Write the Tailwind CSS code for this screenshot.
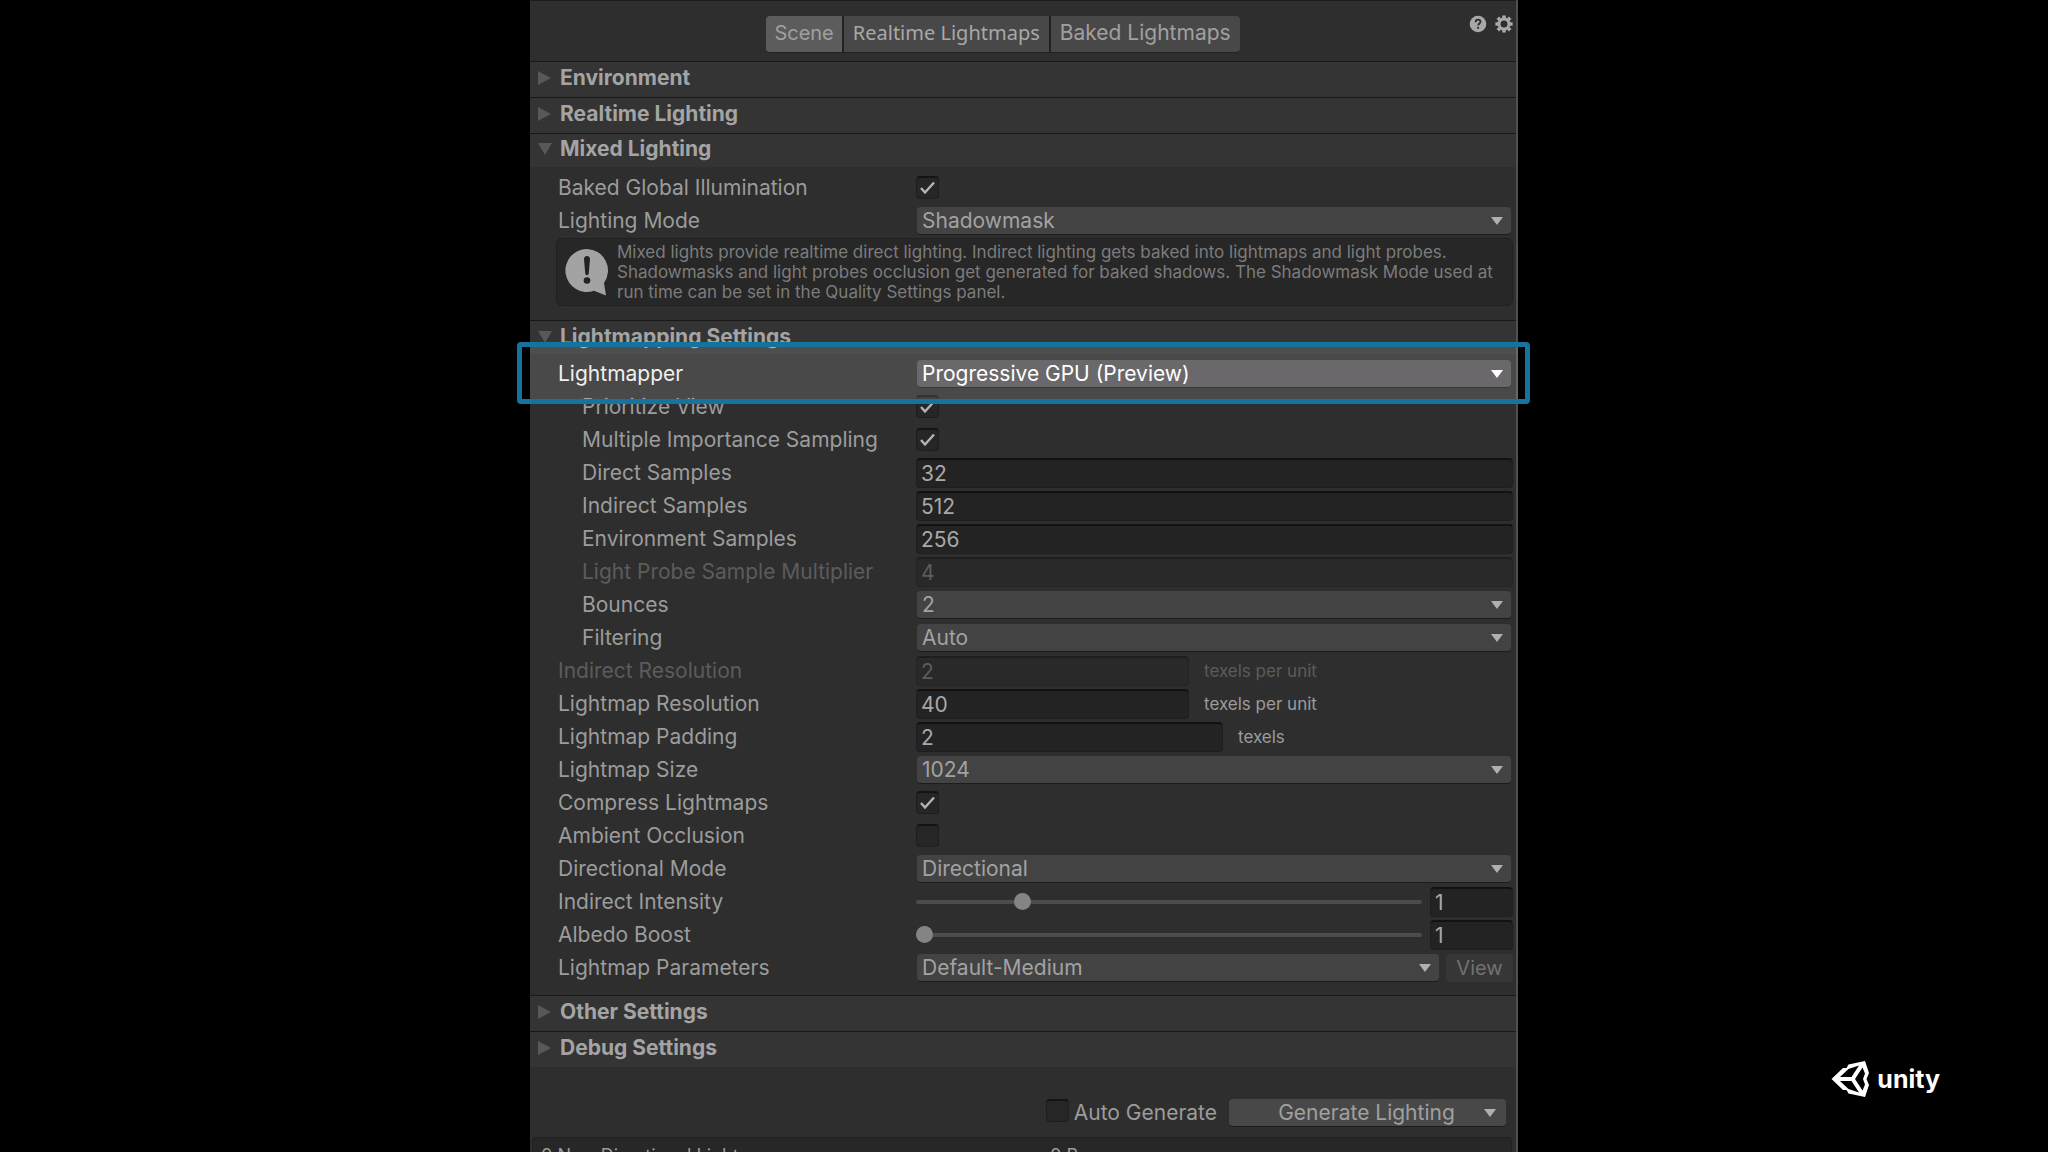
<!DOCTYPE html>
<html lang="en">
<head>
  <meta charset="UTF-8" />
  <meta name="viewport" content="width=device-width, initial-scale=1.0"/>
  <title>Lighting</title>
  <script src="https://cdn.jsdelivr.net/npm/@tailwindcss/browser@4"></script>
</head>
<body class="h-screen overflow-hidden bg-black font-['Inter',sans-serif] text-[21px] leading-7 text-[#9c9c9c]">
  <div class="grid h-full grid-cols-[530fr_988fr_530fr]">
    <div></div>

    <!-- Lighting window -->
    <main class="flex flex-col border-r-2 border-[#505050] bg-[#2e2e2e]">
      <header class="relative flex h-[61px] shrink-0 items-start justify-center border-t border-[#1c1c1c] pt-[15px] pr-10">
        <div class="flex gap-[2px] overflow-hidden rounded border-b border-[#222222] bg-[#222222]">
          <button class="h-9 bg-[#5c5c5c] px-2 pb-0.5 text-xl text-[#a0a0a0]">Scene</button>
          <button class="h-9 bg-[#484848] px-[9px] pb-0.5 font-['Noto_Sans',sans-serif] text-xl text-[#a8a8a8]">Realtime Lightmaps</button>
          <button class="h-9 bg-[#484848] px-[9px] pb-0.5 text-[#a0a0a0]">Baked Lightmaps</button>
        </div>
        <div class="absolute top-[14px] right-[3px] flex gap-2">
          <button aria-label="Help">
            <svg class="size-[18px]" viewBox="0 0 18 18"><circle cx="9" cy="9" r="8.3" fill="#a8a8a8"/><path d="M6.6 7.2c0-1.5 1-2.5 2.5-2.5s2.4.9 2.4 2.1c0 1.7-2.3 1.8-2.3 3.6" fill="none" stroke="#2e2e2e" stroke-width="1.8"/><circle cx="9.1" cy="12.8" r="1.1" fill="#2e2e2e"/></svg>
          </button>
          <button aria-label="Settings">
            <svg class="size-[18px]" viewBox="0 0 18 18"><circle cx="9" cy="9" r="5" fill="none" stroke="#a8a8a8" stroke-width="3"/><path d="M9 .4v3M9 14.600v3M.4 9h3M14.600 9h3M2.800 2.800l2 2M13.200 13.200l2 2M2.800 15.200l2-2M13.200 4.800l2-2" stroke="#a8a8a8" stroke-width="3.6"/></svg>
          </button>
        </div>
      </header>

      <h2 class="flex h-9 shrink-0 items-center gap-2 border-t border-[#181818] bg-[#343434] pb-[3px] pl-2 font-bold text-[#a4a4a4]">
        <svg class="size-3.5" viewBox="0 0 14 14"><path d="M0 0v14l13-7z" fill="#585858"/></svg>
        Environment
      </h2>
      <h2 class="flex h-9 shrink-0 items-center gap-2 border-t border-[#181818] bg-[#343434] pb-[3px] pl-2 font-bold text-[#a4a4a4]">
        <svg class="size-3.5" viewBox="0 0 14 14"><path d="M0 0v14l13-7z" fill="#585858"/></svg>
        Realtime Lighting
      </h2>
      <h2 class="flex h-[34px] shrink-0 items-center gap-2 border-t border-[#181818] bg-[#343434] pb-[3px] pl-2 font-bold text-[#a4a4a4]">
        <svg class="size-3.5" viewBox="0 0 14 14"><path d="M0 1h14l-7 12z" fill="#585858"/></svg>
        Mixed Lighting
      </h2>

      <!-- Mixed lighting fields -->
      <section class="flex shrink-0 flex-col pt-1 pr-[3px] pb-[14px] pl-7">
        <div class="flex h-[33px] items-center">
          <label for="baked-gi" class="w-[358px]">Baked Global Illumination</label>
          <span class="relative">
            <input id="baked-gi" type="checkbox" checked class="peer block size-[23px] appearance-none rounded-sm border border-t-2 border-[#1e1e1e] border-t-[#141414] bg-[#262626]"/>
            <svg class="pointer-events-none absolute inset-0 hidden size-[23px] peer-checked:block" viewBox="0 0 23 23"><path d="M5 12l4 4.5 9-10" fill="none" stroke="#b4b4b4" stroke-width="2.4"/></svg>
          </span>
        </div>
        <div class="flex h-[33px] items-center">
          <label for="mode" class="w-[358px]">Lighting Mode</label>
          <span class="relative flex-1 pr-0.5 pl-px">
            <select id="mode" class="block h-7 w-full appearance-none rounded border-b border-[#1c1c1c] bg-[#434343] px-[5px] text-[#a2a2a2]"><option>Shadowmask</option></select>
            <svg class="pointer-events-none absolute top-[10px] right-[10px] h-2 w-3" viewBox="0 0 12 8"><path d="M0 0h12L6 8z" fill="#b0b0b0"/></svg>
          </span>
        </div>
        <div class="mt-px -ml-0.5 flex h-[68px] items-center gap-2 rounded-md border border-[#202020] bg-[#272727] pl-2">
          <svg class="h-12 w-11 shrink-0" viewBox="0 0 44 48"><path d="M22 1a21.500 21.500 0 1 0 7 41.800L41 47.500l-2-12.500A21.500 21.500 0 0 0 22 1z" fill="#a3a3a3"/><path d="M19 11c0-4 6-4 6 0l-1.200 14c-.2 3-3.400 3-3.600 0z" fill="#222222"/><circle cx="22" cy="32.500" r="3.300" fill="#222222"/></svg>
          <p class="text-[17px] leading-5 whitespace-nowrap text-[#7c7c7c]">Mixed lights provide realtime direct lighting. Indirect lighting gets baked into lightmaps and light probes.<br/>Shadowmasks and light probes occlusion get generated for baked shadows. The Shadowmask Mode used at<br/>run time can be set in the Quality Settings panel.</p>
        </div>
      </section>

      <h2 class="flex h-[34px] shrink-0 items-center gap-2 border-t border-[#181818] bg-[#343434] pb-px pl-2 font-bold text-[#a4a4a4]">
        <svg class="size-3.5" viewBox="0 0 14 14"><path d="M0 1h14l-7 12z" fill="#585858"/></svg>
        Lightmapping Settings
      </h2>

      <!-- Lightmapping fields -->
      <section class="flex shrink-0 flex-col pt-[3px] pb-[11px]">
        <div class="relative z-10 flex h-[33px] items-center pr-[3px] pl-7">
          <div class="absolute -top-[15px] -right-0.5 -bottom-[14px] left-0 bg-white/13"></div>
          <div class="absolute -top-[15px] -right-[14px] -bottom-[14px] -left-[13px] rounded-sm border-5 border-[#15739e]"></div>
          <label for="mapper" class="relative w-[358px] text-[#f0f0f0]">Lightmapper</label>
          <span class="relative flex-1 pr-0.5 pl-px">
            <select id="mapper" class="block h-7 w-full appearance-none rounded border-b border-[#383838] bg-[#6a686a] px-[5px] text-white"><option>Progressive GPU (Preview)</option></select>
            <svg class="pointer-events-none absolute top-[10px] right-[10px] h-2 w-3" viewBox="0 0 12 8"><path d="M0 0h12L6 8z" fill="#ffffff"/></svg>
          </span>
        </div>
        <div class="flex h-[33px] items-center pr-[3px] pl-7">
          <label for="prioritize" class="w-[358px] pl-6">Prioritize View</label>
          <span class="relative">
            <input id="prioritize" type="checkbox" checked class="peer block size-[23px] appearance-none rounded-sm border border-t-2 border-[#1e1e1e] border-t-[#141414] bg-[#262626]"/>
            <svg class="pointer-events-none absolute inset-0 hidden size-[23px] peer-checked:block" viewBox="0 0 23 23"><path d="M5 12l4 4.5 9-10" fill="none" stroke="#b4b4b4" stroke-width="2.4"/></svg>
          </span>
        </div>
        <div class="flex h-[33px] items-center pr-[3px] pl-7">
          <label for="mis" class="w-[358px] pl-6">Multiple Importance Sampling</label>
          <span class="relative">
            <input id="mis" type="checkbox" checked class="peer block size-[23px] appearance-none rounded-sm border border-t-2 border-[#1e1e1e] border-t-[#141414] bg-[#262626]"/>
            <svg class="pointer-events-none absolute inset-0 hidden size-[23px] peer-checked:block" viewBox="0 0 23 23"><path d="M5 12l4 4.5 9-10" fill="none" stroke="#b4b4b4" stroke-width="2.4"/></svg>
          </span>
        </div>
        <div class="flex h-[33px] items-center pr-[3px] pl-7">
          <label for="direct" class="w-[358px] pl-6">Direct Samples</label>
          <input id="direct" value="32" class="h-[30px] flex-1 rounded border border-t-2 border-[#1e1e1e] border-t-[#121212] bg-[#232323] px-1 text-[#a8a8a8]"/>
        </div>
        <div class="flex h-[33px] items-center pr-[3px] pl-7">
          <label for="indirect" class="w-[358px] pl-6">Indirect Samples</label>
          <input id="indirect" value="512" class="h-[30px] flex-1 rounded border border-t-2 border-[#1e1e1e] border-t-[#121212] bg-[#232323] px-1 text-[#a8a8a8]"/>
        </div>
        <div class="flex h-[33px] items-center pr-[3px] pl-7">
          <label for="environment" class="w-[358px] pl-6">Environment Samples</label>
          <input id="environment" value="256" class="h-[30px] flex-1 rounded border border-t-2 border-[#1e1e1e] border-t-[#121212] bg-[#232323] px-1 text-[#a8a8a8]"/>
        </div>
        <div class="flex h-[33px] items-center pr-[3px] pl-7">
          <label for="probe" class="w-[358px] pl-6 text-[#5c5c5c]">Light Probe Sample Multiplier</label>
          <input id="probe" value="4" disabled class="h-[30px] flex-1 rounded border border-t-2 border-[#242424] border-t-[#1e1e1e] bg-[#292929] px-1 text-[#5c5c5c]"/>
        </div>
        <div class="flex h-[33px] items-center pr-[3px] pl-7">
          <label for="bounces" class="w-[358px] pl-6">Bounces</label>
          <span class="relative flex-1 pr-0.5 pl-px">
            <select id="bounces" class="block h-7 w-full appearance-none rounded border-b border-[#1c1c1c] bg-[#434343] px-[5px] text-[#a2a2a2]"><option>2</option></select>
            <svg class="pointer-events-none absolute top-[10px] right-[10px] h-2 w-3" viewBox="0 0 12 8"><path d="M0 0h12L6 8z" fill="#b0b0b0"/></svg>
          </span>
        </div>
        <div class="flex h-[33px] items-center pr-[3px] pl-7">
          <label for="filtering" class="w-[358px] pl-6">Filtering</label>
          <span class="relative flex-1 pr-0.5 pl-px">
            <select id="filtering" class="block h-7 w-full appearance-none rounded border-b border-[#1c1c1c] bg-[#434343] px-[5px] text-[#a2a2a2]"><option>Auto</option></select>
            <svg class="pointer-events-none absolute top-[10px] right-[10px] h-2 w-3" viewBox="0 0 12 8"><path d="M0 0h12L6 8z" fill="#b0b0b0"/></svg>
          </span>
        </div>
        <div class="flex h-[33px] items-center pr-[3px] pl-7">
          <label for="indirect-res" class="w-[358px] text-[#5c5c5c]">Indirect Resolution</label>
          <input id="indirect-res" value="2" disabled class="h-[30px] w-[273px] rounded border border-t-2 border-[#242424] border-t-[#1e1e1e] bg-[#292929] px-1 text-[#5c5c5c]"/>
          <span class="pl-[15px] text-[17px] text-[#5c5c5c]">texels per unit</span>
        </div>
        <div class="flex h-[33px] items-center pr-[3px] pl-7">
          <label for="lightmap-res" class="w-[358px]">Lightmap Resolution</label>
          <input id="lightmap-res" value="40" class="h-[30px] w-[273px] rounded border border-t-2 border-[#1e1e1e] border-t-[#121212] bg-[#232323] px-1 text-[#a8a8a8]"/>
          <span class="pl-[15px] text-[17px]">texels per unit</span>
        </div>
        <div class="flex h-[33px] items-center pr-[3px] pl-7">
          <label for="padding" class="w-[358px]">Lightmap Padding</label>
          <input id="padding" value="2" class="h-[30px] w-[307px] rounded border border-t-2 border-[#1e1e1e] border-t-[#121212] bg-[#232323] px-1 text-[#a8a8a8]"/>
          <span class="pl-[15px] text-[17px]">texels</span>
        </div>
        <div class="flex h-[33px] items-center pr-[3px] pl-7">
          <label for="size" class="w-[358px]">Lightmap Size</label>
          <span class="relative flex-1 pr-0.5 pl-px">
            <select id="size" class="block h-7 w-full appearance-none rounded border-b border-[#1c1c1c] bg-[#434343] px-[5px] text-[#a2a2a2]"><option>1024</option></select>
            <svg class="pointer-events-none absolute top-[10px] right-[10px] h-2 w-3" viewBox="0 0 12 8"><path d="M0 0h12L6 8z" fill="#b0b0b0"/></svg>
          </span>
        </div>
        <div class="flex h-[33px] items-center pr-[3px] pl-7">
          <label for="compress" class="w-[358px]">Compress Lightmaps</label>
          <span class="relative">
            <input id="compress" type="checkbox" checked class="peer block size-[23px] appearance-none rounded-sm border border-t-2 border-[#1e1e1e] border-t-[#141414] bg-[#262626]"/>
            <svg class="pointer-events-none absolute inset-0 hidden size-[23px] peer-checked:block" viewBox="0 0 23 23"><path d="M5 12l4 4.5 9-10" fill="none" stroke="#b4b4b4" stroke-width="2.4"/></svg>
          </span>
        </div>
        <div class="flex h-[33px] items-center pr-[3px] pl-7">
          <label for="ao" class="w-[358px]">Ambient Occlusion</label>
          <input id="ao" type="checkbox" class="size-[23px] appearance-none rounded-sm border border-t-2 border-[#1e1e1e] border-t-[#141414] bg-[#262626]"/>
        </div>
        <div class="flex h-[33px] items-center pr-[3px] pl-7">
          <label for="directional" class="w-[358px]">Directional Mode</label>
          <span class="relative flex-1 pr-0.5 pl-px">
            <select id="directional" class="block h-7 w-full appearance-none rounded border-b border-[#1c1c1c] bg-[#434343] px-[5px] text-[#a2a2a2]"><option>Directional</option></select>
            <svg class="pointer-events-none absolute top-[10px] right-[10px] h-2 w-3" viewBox="0 0 12 8"><path d="M0 0h12L6 8z" fill="#b0b0b0"/></svg>
          </span>
        </div>
        <div class="flex h-[33px] items-center pr-[3px] pl-7">
          <label for="intensity" class="w-[358px]">Indirect Intensity</label>
          <input id="intensity" type="range" min="0" max="5" step="0.1" value="1" class="mr-2 h-1 min-w-0 flex-1 appearance-none rounded-full bg-[#4c4c4c] [&::-webkit-slider-thumb]:size-[17px] [&::-webkit-slider-thumb]:appearance-none [&::-webkit-slider-thumb]:rounded-full [&::-webkit-slider-thumb]:bg-[#848484]"/>
          <input aria-label="Indirect Intensity value" value="1" class="h-[30px] w-[83px] rounded border border-t-2 border-[#1e1e1e] border-t-[#121212] bg-[#232323] px-1 text-[#a8a8a8]"/>
        </div>
        <div class="flex h-[33px] items-center pr-[3px] pl-7">
          <label for="albedo" class="w-[358px]">Albedo Boost</label>
          <input id="albedo" type="range" min="1" max="10" step="0.1" value="1" class="mr-2 h-1 min-w-0 flex-1 appearance-none rounded-full bg-[#4c4c4c] [&::-webkit-slider-thumb]:size-[17px] [&::-webkit-slider-thumb]:appearance-none [&::-webkit-slider-thumb]:rounded-full [&::-webkit-slider-thumb]:bg-[#848484]"/>
          <input aria-label="Albedo Boost value" value="1" class="h-[30px] w-[83px] rounded border border-t-2 border-[#1e1e1e] border-t-[#121212] bg-[#232323] px-1 text-[#a8a8a8]"/>
        </div>
        <div class="flex h-[33px] items-center pr-[3px] pl-7">
          <label for="params" class="w-[358px]">Lightmap Parameters</label>
          <span class="relative flex-1 pr-0.5 pl-px">
            <select id="params" class="block h-7 w-full appearance-none rounded border-b border-[#1c1c1c] bg-[#434343] px-[5px] text-[#a2a2a2]"><option>Default-Medium</option></select>
            <svg class="pointer-events-none absolute top-[10px] right-[10px] h-2 w-3" viewBox="0 0 12 8"><path d="M0 0h12L6 8z" fill="#b0b0b0"/></svg>
          </span>
          <button disabled class="ml-[5px] h-7 w-[67px] rounded bg-[#363636] text-xl text-[#727272]">View</button>
        </div>
      </section>

      <h2 class="flex h-9 shrink-0 items-center gap-2 border-t border-[#181818] bg-[#343434] pb-[3px] pl-2 font-bold text-[#a4a4a4]">
        <svg class="size-3.5" viewBox="0 0 14 14"><path d="M0 0v14l13-7z" fill="#585858"/></svg>
        Other Settings
      </h2>
      <h2 class="flex h-9 shrink-0 items-center gap-2 border-t border-[#181818] bg-[#343434] pb-[3px] pl-2 font-bold text-[#a4a4a4]">
        <svg class="size-3.5" viewBox="0 0 14 14"><path d="M0 0v14l13-7z" fill="#585858"/></svg>
        Debug Settings
      </h2>

      <div class="flex shrink-0 items-start justify-end pt-8 pr-[10px] pb-[10px]">
        <input id="auto" type="checkbox" class="size-[23px] appearance-none rounded-sm border border-t-2 border-[#1e1e1e] border-t-[#141414] bg-[#262626]"/>
        <label for="auto" class="pr-3 pl-[5px]">Auto Generate</label>
        <button class="flex h-7 w-[277px] items-center rounded border-b border-[#1c1c1c] bg-[#484848] pr-[10px] text-[#a0a0a0]">
          <span class="flex-1 pl-5">Generate Lighting</span>
          <svg class="h-2 w-3" viewBox="0 0 12 8"><path d="M0 0h12L6 8z" fill="#b0b0b0"/></svg>
        </button>
      </div>

      <!-- Lightmap stats -->
      <div class="mr-1 ml-0.5 grid shrink-0 grid-cols-2 rounded-t border border-[#202020] bg-[#272727] px-2 pt-1 text-lg">
        <span>0 Non-Directional Lightmaps</span>
        <span class="pl-7">0 B</span>
      </div>
    </main>

    <!-- Brand mark -->
    <div class="flex items-end justify-end gap-[7px] pr-[108px] pb-[53px] text-white">
      <div class="flex items-center gap-[7px] pb-5">
        <svg class="h-[38px] w-[39px]" viewBox="0 0 39 38" fill="#ffffff"><path fill-rule="evenodd" d="M.5 19L12 8h3.500l2-3.500L34 1l4 12-2.500 6 2.500 6-4 12-16.500-3.500-2-3.500H12zM9 17h11.500L28 5.500 17.500 9zM9 21l8.500 8 10.500 3.500L20.500 21zM24 19l7.500 11.500 2.500-6-2-5.500 2-5.500-2.500-6z"/></svg>
        <span class="text-[25px] leading-9 font-bold">unity</span>
      </div>
    </div>
  </div>
</body>
</html>
